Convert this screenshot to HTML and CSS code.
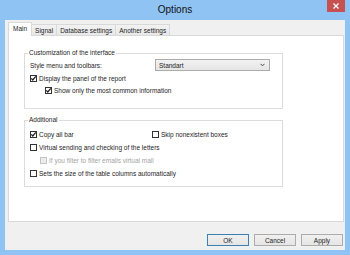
FILE: index.html
```html
<!DOCTYPE html>
<html lang="en">
<head>
    <meta charset="UTF-8">
    <meta name="viewport" content="width=device-width, initial-scale=1.0">
    <title>Options</title>
    <link rel="stylesheet" href="styles.css">
</head>
<body>

    <div class="window">
        <div class="titlebar">
            <span></span>
            <span class="title">Options</span>
            <span class="close">
                <svg width="6" height="6" viewBox="0 0 6 6"><path d="M0.5 0.5 L5.5 5.5 M5.5 0.5 L0.5 5.5" stroke="#fff" stroke-width="1.3"/></svg>
            </span>
        </div>

        <div class="client">
            <div class="tabs">
                <div class="tab active">Main</div>
                <div class="tab">Signal</div>
                <div class="tab">Database settings</div>
                <div class="tab">Another settings</div>
            </div>

            <div class="panel">
                <fieldset class="group group-main">
                    <legend>Customization of the interface</legend>
                    <div class="row row-select">
                        <span>Style menu and toolbars:</span>
                        <div class="select">
                            <span>Standart</span>
                            <svg width="5" height="4" viewBox="0 0 5 4"><path d="M0.5 0.8 L2.5 2.8 L4.5 0.8" stroke="#444" stroke-width="1" fill="none"/></svg>
                        </div>
                    </div>
                    <div class="row">
                        <span class="check on"><svg width="7" height="7" viewBox="0 0 7 7"><path d="M1.3 3.4 L2.8 5 L5.8 1.4" stroke="#222" stroke-width="1.3" fill="none"/></svg></span>
                        Display the panel of the report
                    </div>
                    <div class="row sub">
                        <span class="check on"><svg width="7" height="7" viewBox="0 0 7 7"><path d="M1.3 3.4 L2.8 5 L5.8 1.4" stroke="#222" stroke-width="1.3" fill="none"/></svg></span>
                        Show only the most common information
                    </div>
                </fieldset>

                <fieldset class="group group-extra">
                    <legend>Additional</legend>
                    <div class="row pair">
                        <div class="opt">
                            <span class="check on"><svg width="7" height="7" viewBox="0 0 7 7"><path d="M1.3 3.4 L2.8 5 L5.8 1.4" stroke="#222" stroke-width="1.3" fill="none"/></svg></span>
                            Copy all bar
                        </div>
                        <div class="opt">
                            <span class="check"></span>
                            Skip nonexistent boxes
                        </div>
                    </div>
                    <div class="row">
                        <span class="check"></span>
                        Virtual sending and checking of the letters
                    </div>
                    <div class="row sub-small disabled">
                        <span class="check"></span>
                        If you filter to filter emails virtual mail
                    </div>
                    <div class="row">
                        <span class="check"></span>
                        Sets the size of the table columns automatically
                    </div>
                </fieldset>
            </div>

            <div class="buttons">
                <button class="btn default">OK</button>
                <button class="btn">Cancel</button>
                <button class="btn">Apply</button>
            </div>
        </div>
    </div>

</body>
</html>
```

FILE: styles.css
```css
body {
    margin: 0;
    font-family: "Liberation Sans", Arial, sans-serif;
    font-size: 6.5px;
    color: #1e1e1e;
}
.window {
    width: 350px;
    height: 255px;
    background-color: #8fc3f3;
    display: flex;
    flex-direction: column;
}
.titlebar {
    height: 20px;
    display: grid;
    grid-template-columns: 1fr auto 1fr;
    align-items: start;
}
.title {
    font-size: 10px;
    line-height: 20px;
    color: #111;
}
.close {
    justify-self: end;
    margin-right: 5px;
    width: 18px;
    height: 12px;
    background-color: #c75050;
    display: flex;
    align-items: center;
    justify-content: center;
}
.client {
    margin: 0 5px 5px;
    flex: 1;
    background-color: #f0f0f0;
    padding: 2px 1px 4px 3px;
}
.tabs {
    display: flex;
    align-items: flex-end;
    height: 13px;
}
.tab {
    height: 11px;
    line-height: 11px;
    padding: 0 3px;
    border: 1px solid #d9d9d9;
    border-bottom: none;
    background: linear-gradient(#f2f2f2, #e8e8e8);
    box-sizing: border-box;
    margin-left: -1px;
}
.tab.active {
    margin-left: 0;
    height: 14px;
    line-height: 12px;
    margin-bottom: -1px;
    padding: 0 4px;
    background: white;
    position: relative;
    z-index: 1;
}
.panel {
    height: 187px;
    box-sizing: border-box;
    background: white;
    border: 1px solid #d9d9d9;
    padding-top: 13px;
}
.group {
    margin: 0 0 0 15px;
    width: 259px;
    box-sizing: border-box;
    border: 1px solid #dcdcdc;
    padding: 2px 12px 12px 5px;
    min-width: 0;
}
.group legend {
    line-height: 8px;
    padding: 0 1px;
    margin-left: -2px;
}
.group-extra {
    margin-top: 7px;
    padding: 4px 12px 6px 5px;
}
.row {
    height: 12px;
    display: flex;
    align-items: center;
    white-space: nowrap;
}
.group-extra .row {
    height: 13px;
}
.row-select {
    justify-content: space-between;
    margin-bottom: 1px;
}
.select {
    width: 115px;
    height: 12px;
    box-sizing: border-box;
    border: 1px solid #acacac;
    background: linear-gradient(#f2f2f2, #e5e5e5);
    display: flex;
    align-items: center;
    justify-content: space-between;
    padding: 0 4px 0 3px;
}
.check {
    width: 7px;
    height: 7px;
    box-sizing: border-box;
    border: 1px solid #333;
    background: white;
    margin-right: 2px;
    position: relative;
    flex: none;
}
.check svg {
    position: absolute;
    left: -1px;
    top: -1px;
}
.sub {
    padding-left: 15px;
}
.sub-small {
    padding-left: 10px;
}
.disabled {
    color: #a3a3a3;
}
.disabled .check {
    border-color: #c4c4c4;
    background: #ececec;
}
.pair {
    display: grid;
    grid-template-columns: 122px auto;
}
.opt {
    display: flex;
    align-items: center;
}
.buttons {
    display: flex;
    justify-content: flex-end;
    gap: 5px;
    margin: 12px 1px 0 0;
}
.btn {
    width: 42px;
    height: 12px;
    padding: 0;
    font-family: inherit;
    font-size: 6.5px;
    color: #1e1e1e;
    border: 1px solid #acacac;
    background: linear-gradient(#f0f0f0, #e5e5e5);
}
.btn.default {
    border-color: #3c7fb1;
}
```
